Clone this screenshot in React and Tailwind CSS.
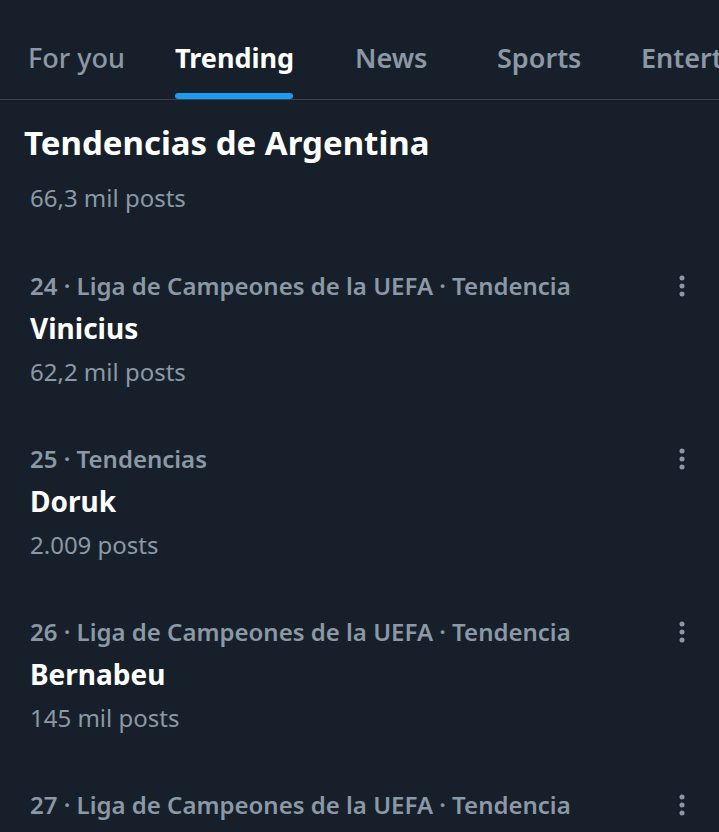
import React from "react";

const trends = [
  { meta: "24 · Liga de Campeones de la UEFA · Tendencia", name: "Vinicius", posts: "62,2 mil posts" },
  { meta: "25 · Tendencias", name: "Doruk", posts: "2.009 posts" },
  { meta: "26 · Liga de Campeones de la UEFA · Tendencia", name: "Bernabeu", posts: "145 mil posts" },
  { meta: "27 · Liga de Campeones de la UEFA · Tendencia" },
];

const Dots = () => (
  <svg width="8" height="22" viewBox="0 0 8 22" className="text-[#8b98a5]">
    <circle cx="4" cy="3" r="2.5" fill="currentColor" />
    <circle cx="4" cy="11" r="2.5" fill="currentColor" />
    <circle cx="4" cy="19" r="2.5" fill="currentColor" />
  </svg>
);

const Trend = ({ t }) => (
  <div className="flex pl-[30px] pr-[33px] h-[173px]">
    <div className="flex-1 flex flex-col">
      <div className="h-[43px] text-[24px] font-semibold text-[#8b98a5] leading-[43px] whitespace-nowrap">{t.meta}</div>
      {t.name && <div className="h-[43px] text-[28px] font-bold text-white leading-[43px]">{t.name}</div>}
      {t.posts && <div className="h-[43px] text-[24px] text-[#8b98a5] leading-[43px]">{t.posts}</div>}
    </div>
    <div className="pt-[11px]">
      <Dots />
    </div>
  </div>
);

export default function App() {
  return (
    <div className="w-[719px] h-[832px] overflow-hidden bg-[#17202a] font-['Noto_Sans',sans-serif]">
      <div className="flex h-[100px] border-b border-[#38444d] whitespace-nowrap overflow-hidden text-[27px] leading-[40px]">
        <div className="shrink-0 w-[175px] pl-[28px] pt-[38px] font-medium text-[#8b98a5]">For you</div>
        <div className="shrink-0 w-[180px] flex flex-col">
          <div className="pt-[38px] h-[93px] font-bold text-white">Trending</div>
          <div className="w-[118px] h-[6px] rounded-full bg-[#1d9bf0]"></div>
        </div>
        <div className="shrink-0 w-[142px] pt-[38px] font-semibold text-[#8b98a5]">News</div>
        <div className="shrink-0 w-[144px] pt-[38px] font-semibold text-[#8b98a5]">Sports</div>
        <div className="shrink-0 pt-[38px] font-semibold text-[#8b98a5]">Entertainment</div>
      </div>
      <div className="pl-[24px] pt-[23px] text-[33px] font-bold text-white leading-[40px]">Tendencias de Argentina</div>
      <div className="pl-[30px] mt-[13px] mb-[45px] text-[24px] text-[#8b98a5] leading-[43px]">66,3 mil posts</div>
      {trends.map((t) => (
        <Trend key={t.meta + (t.name || "")} t={t} />
      ))}
    </div>
  );
}
